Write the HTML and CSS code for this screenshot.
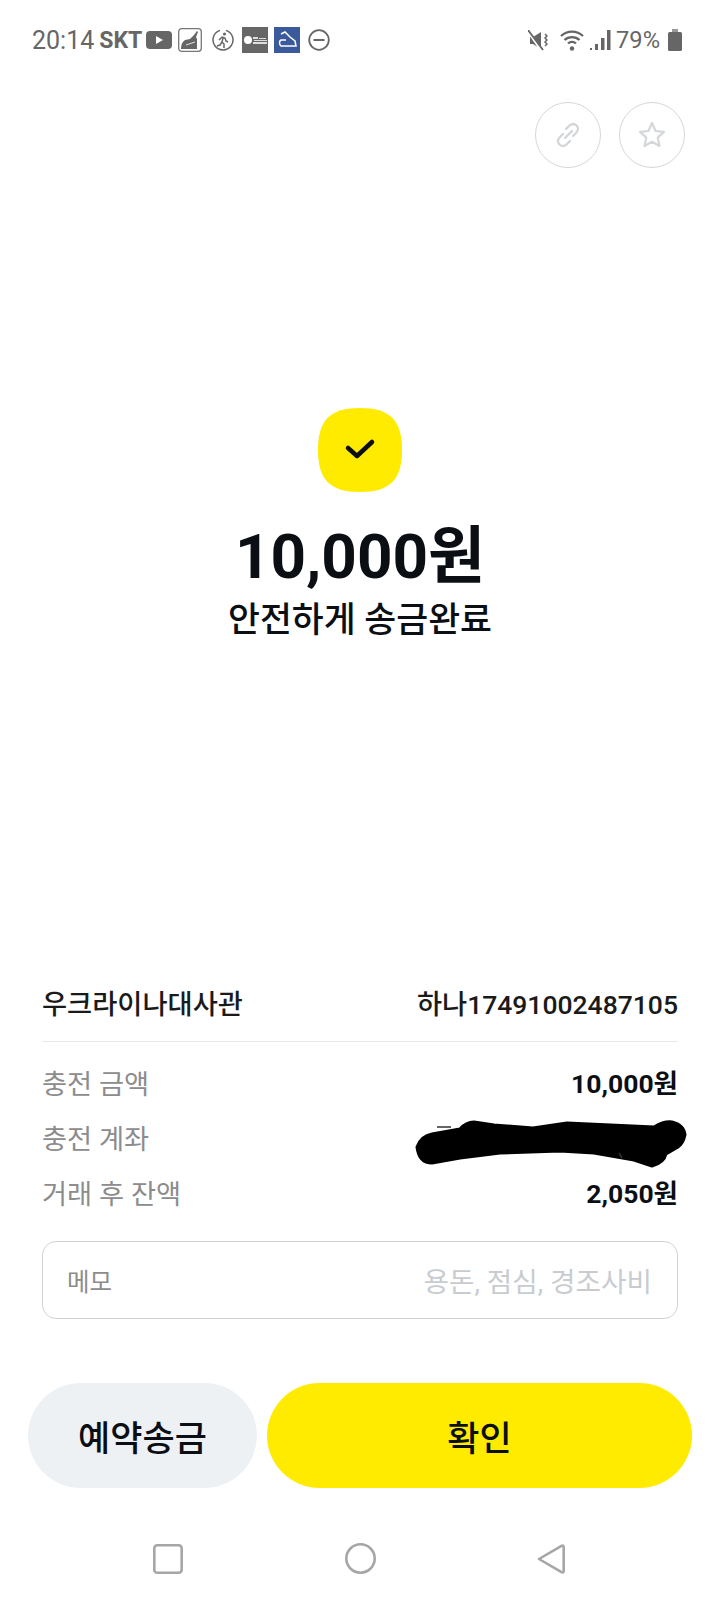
FILE: index.html
```html
<!DOCTYPE html>
<html lang="ko">
<head>
    <meta charset="UTF-8">
    <meta name="viewport" content="width=device-width, initial-scale=1.0">
    <title>송금완료</title>
    <link rel="stylesheet" href="styles.css">
</head>
<body>
    <div class="page">
        <div class="status-bar">
            <div class="status-left">
                <span class="clock">20:14</span>
                <span class="carrier">SKT</span>
                <svg class="ic-youtube" width="26" height="18" viewBox="0 0 26 18"><rect width="26" height="18" rx="4" fill="#666"/><path d="M10 5l7 4-7 4z" fill="#fff"/></svg>
                <svg class="ic-broom" width="24" height="24" viewBox="0 0 24 24"><rect x=".7" y=".7" width="22.6" height="22.6" rx="3" fill="none" stroke="#777" stroke-width="1.3"/><path d="M3 21c0-4 1-7 4-9l5-1 4-4 3-4 1 1-2 5 1 2v10z" fill="#666"/><path d="M8 17l9-3" stroke="#fff" stroke-width=".8"/></svg>
                <svg class="ic-run" width="22" height="22" viewBox="0 0 22 22"><path d="M8 1.400A10 10 0 1 0 14 1.400" fill="none" stroke="#666" stroke-width="1.500"/><circle cx="12.500" cy="5" r="1.600" fill="#666"/><path d="M7 11l3-3 3 1 1 3 2 1M11 9l-1 4 2 2 0 4M10 13l-2 3-3 1" fill="none" stroke="#666" stroke-width="1.500"/></svg>
                <svg class="ic-tile" width="26" height="26" viewBox="0 0 26 26"><rect width="26" height="26" fill="#666"/><circle cx="6" cy="13" r="4" fill="#fff"/><path d="M11 10h5v2h-5zM12 13h13v1h-13zM11 15h14v2h-14zM17 11h7v1h-7z" fill="#ddd"/></svg>
                <svg class="ic-tile" width="26" height="26" viewBox="0 0 26 26"><rect width="26" height="26" fill="#3a5a9b"/><path d="M7 7l4-2 5 5 5 4 1 5H7c-2-2-2-5 0-6h5" fill="none" stroke="#fff" stroke-width="1.500"/></svg>
                <svg class="ic-dnd" width="22" height="22" viewBox="0 0 22 22"><circle cx="11" cy="11" r="9.800" fill="none" stroke="#666" stroke-width="1.800"/><rect x="5.500" y="10" width="11" height="2" fill="#666"/></svg>
            </div>
            <div class="status-right">
                <svg class="ic-mute" width="20" height="21" viewBox="0 0 20 21"><path d="M2 7h3l8-5v17l-8-5H2z" fill="#666"/><path d="M0 1l14 20" stroke="#fff" stroke-width="3"/><path d="M0 0l15 20" stroke="#666" stroke-width="1.800"/><path d="M17 4l2 2-2 2 2 2-2 2 2 2-2 2" fill="none" stroke="#666" stroke-width="1.500"/></svg>
                <svg class="ic-wifi" width="24" height="22" viewBox="0 0 24 22"><path d="M1 7a16 16 0 0 1 22 0M4.500 11a11 11 0 0 1 15 0M8 14.500a6 6 0 0 1 8 0" fill="none" stroke="#666" stroke-width="2.300"/><circle cx="12" cy="19.500" r="2.200" fill="#666"/></svg>
                <svg class="ic-signal" width="21" height="20" viewBox="0 0 21 20"><path d="M0 18h2v2H0zM5 14h3v6H5zM11 8h3.500v12H11zM17 0h3.500v20H17z" fill="#666"/></svg>
                <span class="battery-text">79%</span>
                <svg class="ic-battery" width="14" height="22" viewBox="0 0 14 22"><path d="M4 0h6v3H4z" fill="#999"/><rect y="3" width="14" height="19" rx="1.500" fill="#666"/></svg>
            </div>
        </div>

        <div class="top-actions">
            <div class="round-btn">
                <svg width="32" height="32" viewBox="0 0 32 32" fill="none" stroke="#d3d7da" stroke-width="2.400" stroke-linecap="round"><path d="M13 19l7-7"/><path d="M14 10l3-3c2.500-2.500 5.500-2.500 7.500-.5s2 5-.5 7.500l-3 3"/><path d="M18 22l-3 3c-2.500 2.500-5.500 2.500-7.500.5s-2-5 .5-7.500l3-3"/></svg>
            </div>
            <div class="round-btn">
                <svg width="30" height="30" viewBox="0 0 30 30" fill="none" stroke="#d3d7da" stroke-width="2.200" stroke-linejoin="round"><path d="M15 3l3.600 8 8.400.9-6.300 5.700 1.800 8.400-7.500-4.300L7.500 26l1.800-8.400L3 11.900l8.400-.9z"/></svg>
            </div>
        </div>

        <div class="result">
            <svg class="check-badge" width="84" height="84" viewBox="0 0 84 84"><path d="M42 0C72 0 84 12 84 42S72 84 42 84 0 72 0 42 12 0 42 0z" fill="#ffeb00"/><path d="M30 40l9 8 15-14" fill="none" stroke="#0b0f14" stroke-width="4.500" stroke-linecap="round" stroke-linejoin="round"/></svg>
            <div class="amount">10,000원</div>
            <div class="result-label">안전하게 송금완료</div>
        </div>

        <div class="details">
            <div class="recipient">
                <span>우크라이나대사관</span>
                <span>하나<span class="num">17491002487105</span></span>
            </div>
            <div class="info-list">
                <div class="info-row"><span class="info-label">충전 금액</span><b class="value">10,000원</b></div>
                <div class="info-row">
                    <span class="info-label">충전 계좌</span>
                    <svg class="scribble" width="274" height="50" viewBox="0 0 274 50"><path d="M3 28Q7 17 18 15L46 10Q52 3 60 3L80 6 119 9 153 4 240 8Q250 2 258 3 270 6 271 16 269 25 264 28L252 35Q250 44 238 47L220 41 180 34 146 32 86 34 46 39 18 44Q5 44 3 28z" fill="#000" stroke="#000" stroke-width="3" stroke-linejoin="round"/><path d="M23 8h14M205 34l3 5" stroke="#333" stroke-width="1.500"/></svg>
                </div>
                <div class="info-row"><span class="info-label">거래 후 잔액</span><b class="value">2,050원</b></div>
            </div>
            <div class="memo">
                <span class="memo-label">메모</span>
                <span class="memo-hint">용돈, 점심, 경조사비</span>
            </div>
        </div>

        <div class="buttons">
            <div class="btn btn-gray">예약송금</div>
            <div class="btn btn-yellow">확인</div>
        </div>

        <div class="nav-bar">
            <svg width="30" height="30" viewBox="0 0 30 30"><rect x="1.300" y="1.300" width="27.400" height="27.400" rx="3" fill="none" stroke="#a6a6a6" stroke-width="2.600"/></svg>
            <svg width="31" height="31" viewBox="0 0 31 31"><circle cx="15.500" cy="15.500" r="14.200" fill="none" stroke="#a6a6a6" stroke-width="2.600"/></svg>
            <svg width="28" height="30" viewBox="0 0 28 30"><path d="M2 15L24.500 1.800c1-.6 2.200 0 2.200 1.200v24c0 1.200-1.200 1.800-2.200 1.200z" fill="none" stroke="#a6a6a6" stroke-width="2.600" stroke-linejoin="round"/></svg>
        </div>
    </div>
</body>
</html>
```

FILE: styles.css
```css
* {
    box-sizing: border-box;
}
body {
    margin: 0;
    background-color: #fff;
    font-family: Roboto, "Noto Sans CJK KR", sans-serif;
    color: #0b0f14;
}
.page {
    width: 720px;
    height: 1600px;
    display: flex;
    flex-direction: column;
    overflow: hidden;
}
.status-bar {
    height: 80px;
    padding: 0 38px 0 32px;
    display: flex;
    align-items: center;
    justify-content: space-between;
    color: #666;
    font-size: 25px;
}
.status-left, .status-right {
    display: flex;
    align-items: center;
}
.carrier {
    font-size: 23px;
    font-weight: 700;
    margin-left: 5px;
}
.ic-youtube { margin-left: 4px; }
.ic-broom { margin-left: 6px; }
.ic-run { margin-left: 10px; }
.ic-tile { margin-left: 8px; }
.ic-tile + .ic-tile { margin-left: 6px; }
.ic-dnd { margin-left: 8px; }
.ic-wifi { margin-left: 12px; }
.ic-signal { margin-left: 6px; }
.battery-text { margin-left: 5px; font-size: 23.700px; }
.ic-battery { margin-left: 8px; }
.top-actions {
    display: flex;
    justify-content: flex-end;
    gap: 18px;
    padding: 22px 35px 0 0;
}
.round-btn {
    width: 66px;
    height: 66px;
    border: 1px solid #d5d8da;
    border-radius: 50%;
    display: flex;
    align-items: center;
    justify-content: center;
}
.result {
    margin-top: 240px;
    display: flex;
    flex-direction: column;
    align-items: center;
}
.check-badge {
    display: block;
}
.amount {
    margin-top: 28px;
    height: 74px;
    line-height: 74px;
    font-size: 62px;
    font-weight: 700;
}
.result-label {
    height: 52px;
    line-height: 52px;
    font-size: 34.700px;
    font-weight: 500;
}
.details {
    margin-top: 317px;
    padding: 0 42px;
}
.recipient {
    height: 79px;
    display: flex;
    align-items: center;
    justify-content: space-between;
    font-size: 27.300px;
    font-weight: 500;
    color: #1a1a1a;
    border-bottom: 1px solid #e6e8ea;
}
.recipient .num {
    font-size: 26.500px;
}
.value {
    font-size: 26.500px;
}
.info-list {
    padding-top: 12px;
}
.info-row {
    position: relative;
    height: 55px;
    display: flex;
    align-items: center;
    justify-content: space-between;
    font-size: 27.300px;
}
.info-label {
    color: #8c8c8c;
}
.scribble {
    position: absolute;
    right: -10px;
    top: 10px;
}
.memo {
    margin-top: 22px;
    height: 78px;
    padding: 0 25px 0 24px;
    display: flex;
    align-items: center;
    justify-content: space-between;
    border: 1px solid #d0d3d6;
    border-radius: 14px;
}
.memo-label {
    color: #8c8c8c;
    font-size: 24.500px;
}
.memo-hint {
    color: #c8ccd0;
    font-size: 27.700px;
}
.buttons {
    margin-top: 64px;
    padding: 0 28px;
    display: flex;
    gap: 10px;
}
.btn {
    height: 105px;
    border-radius: 53px;
    display: flex;
    align-items: center;
    justify-content: center;
    font-size: 35px;
    font-weight: 500;
}
.btn-gray {
    width: 229px;
    background-color: #eef1f4;
}
.btn-yellow {
    flex: 1;
    background-color: #ffeb00;
}
.nav-bar {
    margin-top: 55px;
    padding: 0 155px 0 153px;
    display: flex;
    align-items: center;
    justify-content: space-between;
}
```
